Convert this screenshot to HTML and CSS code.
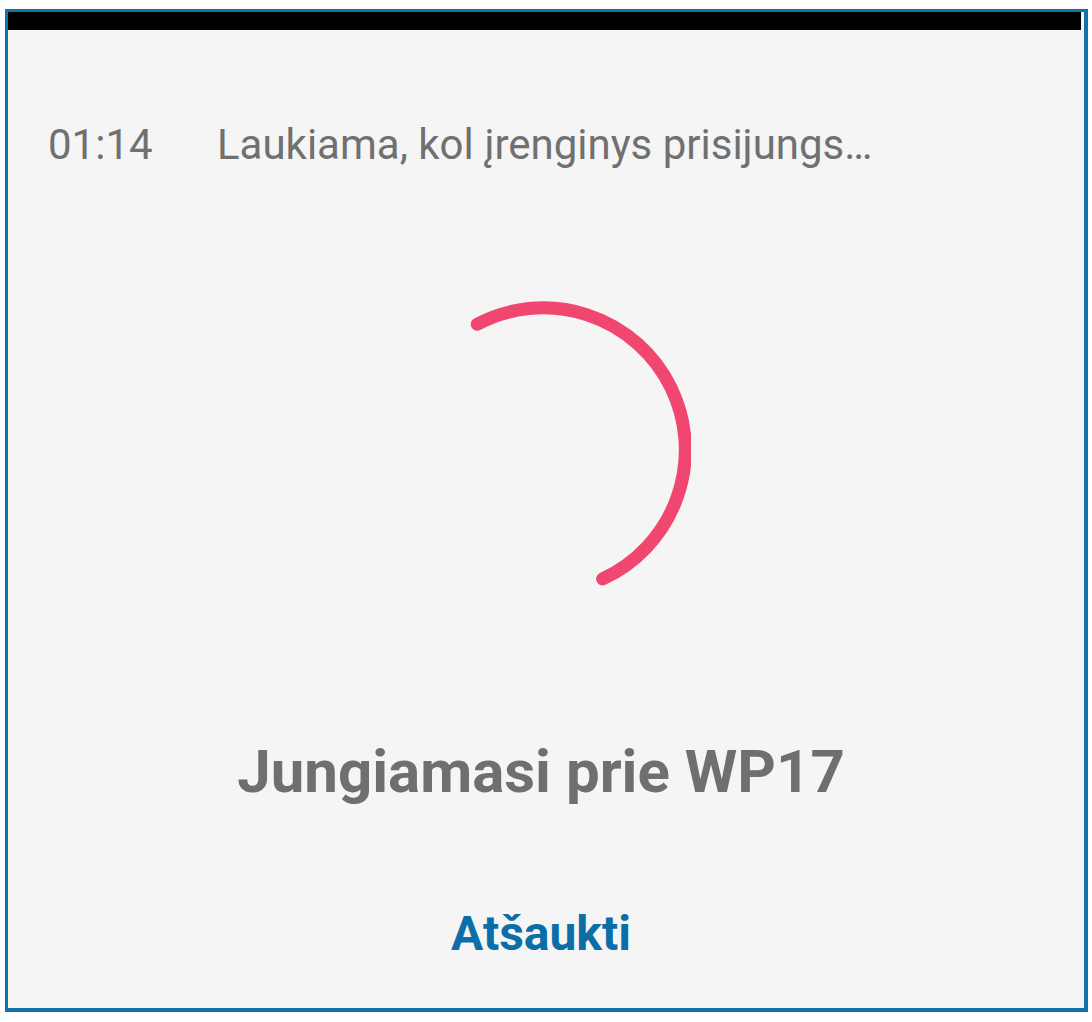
FILE: index.html
```html
<!DOCTYPE html>
<html lang="lt">
<head>
<meta charset="utf-8">
<title>Jungiamasi prie WP17</title>
<link rel="stylesheet" href="styles.css">
</head>
<body>
<div class="frame">
  <div class="statusbar"></div>
  <div class="screen">
    <div class="header">
      <span class="timer">01:14</span>
      <span class="message">Laukiama, kol įrenginys prisijungs…</span>
    </div>
    <div class="content">
      <svg class="spinner" width="300" height="300" viewBox="0 0 300 300" aria-hidden="true">
        <path d="M86.2 24.2 A142 142 0 1 1 211.6 278.9" fill="none" stroke="#f0466f" stroke-width="13" stroke-linecap="round"/>
      </svg>
      <h1 class="title">Jungiamasi prie WP17</h1>
      <button class="cancel" type="button">Atšaukti</button>
    </div>
  </div>
</div>
</body>
</html>
```

FILE: styles.css
```css
html, body {
  margin: 0;
  padding: 0;
  background: #ffffff;
}

body {
  font-family: Roboto, "Liberation Sans", Arial, sans-serif;
}

.frame {
  box-sizing: border-box;
  margin: 9px 0 0 5px;
  width: 1083px;
  height: 1003px;
  border-style: solid;
  border-color: #1273ab;
  border-width: 3px 4px 4px 3px;
  background: #f5f5f5;
  display: flex;
  flex-direction: column;
}

.statusbar {
  height: 18px;
  background: #000000;
  margin-right: 3px;
  flex: none;
}

.screen {
  flex: 1;
  display: flex;
  flex-direction: column;
}

.header {
  display: flex;
  align-items: baseline;
  padding: 90px 0 0 40px;
  font-size: 42px;
  line-height: 49px;
  color: #707070;
}

.timer {
  width: 169px;
  flex: none;
}

.content {
  display: flex;
  flex-direction: column;
  align-items: center;
  padding-right: 10px;
}

.spinner {
  display: block;
  margin-top: 131px;
}

.title {
  margin: 137px 0 0;
  font-size: 60px;
  line-height: 70px;
  font-weight: 700;
  color: #6f6f6f;
}

.cancel {
  margin-top: 99px;
  padding: 0;
  border: none;
  background: none;
  font-family: inherit;
  font-size: 48px;
  line-height: 55px;
  font-weight: 700;
  color: #0b6ea8;
  cursor: pointer;
}
```
